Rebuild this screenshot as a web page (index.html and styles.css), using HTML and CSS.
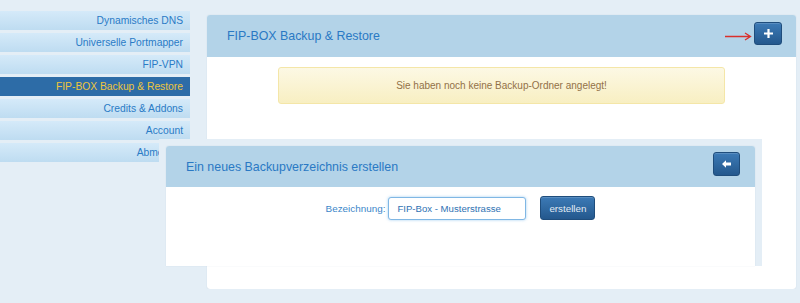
FILE: index.html
```html
<!DOCTYPE html>
<html lang="de">
<head>
    <meta charset="UTF-8">
    <meta name="viewport" content="width=device-width, initial-scale=1.0">
    <title>FIP-BOX Backup &amp; Restore</title>
    <link rel="stylesheet" href="styles.css">
</head>
<body>
    <div class="page">
        <ul class="side-menu">
            <li><a href="#">Dynamisches DNS</a></li>
            <li><a href="#">Universelle Portmapper</a></li>
            <li><a href="#">FIP-VPN</a></li>
            <li class="active"><a href="#">FIP-BOX Backup &amp; Restore</a></li>
            <li><a href="#">Credits &amp; Addons</a></li>
            <li><a href="#">Account</a></li>
            <li><a href="#">Abmelden</a></li>
        </ul>

        <div class="panel main-panel">
            <div class="panel-head">
                <h2>FIP-BOX Backup &amp; Restore</h2>
                <svg class="hint-arrow" width="27" height="9" viewBox="0 0 27 9">
                    <path d="M0 4.5H25M20 1L25.5 4.5L20 8" fill="none" stroke="#d9302c" stroke-width="1.3"/>
                </svg>
                <button class="btn btn-icon" title="Neu">
                    <svg width="9" height="9" viewBox="0 0 9 9"><path d="M3.4 0h2.2v3.4H9v2.2H5.6V9H3.4V5.6H0V3.4h3.4z" fill="#fff"/></svg>
                </button>
            </div>
            <div class="panel-body">
                <div class="alert">Sie haben noch keine Backup-Ordner angelegt!</div>
            </div>
        </div>
    </div>

    <div class="overlay">
        <div class="panel">
            <div class="panel-head">
                <h2>Ein neues Backupverzeichnis erstellen</h2>
                <button class="btn btn-icon back" title="Zurück">
                    <svg width="9" height="8" viewBox="0 0 9 8"><path d="M0 4L4 0.3V2.6H9V5.4H4V7.7Z" fill="#fff"/></svg>
                </button>
            </div>
            <div class="panel-body">
                <form class="new-folder" onsubmit="return false">
                    <label for="folder-name">Bezeichnung:</label>
                    <input type="text" id="folder-name" value="FIP-Box - Musterstrasse">
                    <button class="btn">erstellen</button>
                </form>
            </div>
        </div>
    </div>
</body>
</html>
```

FILE: styles.css
```css
body {
    margin: 0;
    background: #e4eef6;
    font-family: "Liberation Sans", Arial, sans-serif;
}
.page {
    display: flex;
    align-items: flex-start;
    padding-top: 11px;
}
.side-menu {
    list-style: none;
    margin: 0;
    padding: 0;
    width: 190px;
    display: flex;
    flex-direction: column;
    gap: 3px;
}
.side-menu li a {
    display: block;
    height: 19px;
    line-height: 19px;
    padding-right: 7px;
    text-align: right;
    font-size: 10.3px;
    color: #2a7bc6;
    text-decoration: none;
    background: linear-gradient(#d5eaf9, #bedcf1);
}
.side-menu li.active a {
    background: #2d6ca7;
    color: #eec53c;
}
.panel {
    background: #fff;
    border-radius: 3px;
    box-shadow: 0 0 1px rgba(60, 100, 140, 0.25);
    overflow: hidden;
}
.main-panel {
    margin: 4px 0 0 17px;
    width: 589px;
    height: 274px;
}
.panel-head {
    display: flex;
    align-items: center;
    height: 42px;
    padding: 0 14px 0 20px;
    background: #b3d3e8;
}
.panel-head h2 {
    flex: 1;
    margin: 0;
    font-size: 12.4px;
    font-weight: normal;
    color: #2a79c4;
}
.hint-arrow {
    margin: 0 2px 0 0;
}
.btn {
    font-family: inherit;
    font-size: 9.8px;
    color: #e2ebf4;
    background: linear-gradient(#3c7ab6, #24588d);
    border: 1px solid #1f4d7c;
    border-radius: 3px;
    box-shadow: inset 0 1px 0 rgba(255, 255, 255, 0.15);
    cursor: pointer;
}
.btn-icon {
    display: flex;
    align-items: center;
    justify-content: center;
    width: 28px;
    height: 23px;
    padding: 0;
    align-self: flex-start;
    margin-top: 7px;
}
.panel-body {
    padding-top: 10px;
}
.alert {
    width: 445px;
    height: 35px;
    margin: 0 auto;
    line-height: 35px;
    text-align: center;
    font-size: 10px;
    color: #927148;
    background: linear-gradient(#fcf8e4, #f8efc2);
    border: 1px solid #f4e6a8;
    border-radius: 3px;
}

/* Fenster zum Anlegen eines neuen Ordners, liegt über der Seite */
.overlay {
    position: absolute;
    left: 159px;
    top: 139px;
    width: 589px;
    padding: 7px 7px 0 7px;
    background: #e4eef6;
}
.overlay .panel {
    border-radius: 3px 3px 0 0;
}
.overlay .panel-head {
    height: 41px;
    padding-right: 15px;
}
.overlay .btn-icon {
    width: 27px;
    height: 24px;
    margin-top: 6px;
}
.overlay .panel-body {
    height: 70px;
    padding-top: 9px;
}
.new-folder {
    display: flex;
    align-items: center;
    justify-content: center;
}
.new-folder label {
    font-size: 9.9px;
    color: #3b86c9;
    margin-right: 3px;
}
.new-folder input {
    box-sizing: border-box;
    width: 138px;
    height: 23px;
    padding: 0 8px;
    font-family: inherit;
    font-size: 9.6px;
    color: #2f72b3;
    border: 1px solid #80b7e4;
    border-radius: 3px;
    box-shadow: 0 0 3px rgba(102, 175, 233, 0.6);
    outline: none;
}
.new-folder .btn {
    margin-left: 14px;
    width: 55px;
    height: 24px;
    padding: 0;
}
```
